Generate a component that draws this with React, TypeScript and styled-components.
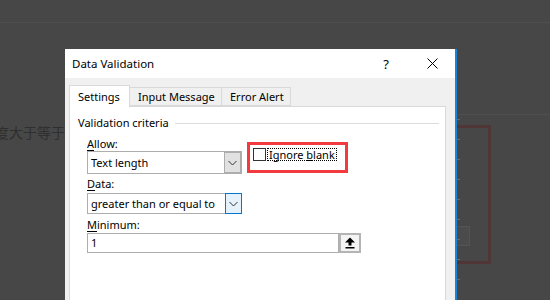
import styled, { createGlobalStyle } from "styled-components";

const GlobalStyle = createGlobalStyle`
  html, body {
    margin: 0;
    padding: 0;
  }
  body {
    width: 550px;
    height: 300px;
    overflow: hidden;
    background: #474747;
    font-family: "Noto Sans", "Segoe UI", sans-serif;
  }
`;

const Desktop = styled.div`
  position: relative;
  width: 550px;
  height: 300px;
  overflow: hidden;
  background: #474747;
`;

// sheet content behind the dialog
const SheetLine = styled.div<{ top: number; left: number; width: number }>`
  position: absolute;
  top: ${(p) => p.top}px;
  left: ${(p) => p.left}px;
  width: ${(p) => p.width}px;
  height: 1px;
  background: #4f4f4f;
`;

const SheetText = styled.div`
  position: absolute;
  left: -5px;
  top: 123px;
  font-family: "Noto Sans CJK SC", sans-serif;
  font-size: 14px;
  line-height: 18px;
  color: #2f2f2f;
  white-space: nowrap;
`;

const DimRect = styled.div`
  position: absolute;
  left: 300px;
  top: 125px;
  width: 191px;
  height: 139px;
  box-sizing: border-box;
  border: 3px solid #4f3536;
`;

const DimButton = styled.div`
  position: absolute;
  left: 452px;
  top: 226px;
  width: 18px;
  height: 20px;
  box-sizing: border-box;
  border: 1px solid #545454;
  background: #4b4b4b;
`;

const Tick = styled.div<{ top: number }>`
  position: absolute;
  left: 457px;
  top: ${(p) => p.top}px;
  width: 3px;
  height: 1px;
  background: #6a6a6a;
`;

const Dialog = styled.div`
  position: absolute;
  left: 65px;
  top: 49px;
  width: 392px;
  height: 270px;
  box-sizing: border-box;
  border-right: 2px solid #1883d7;
  background: #f0f0f0;
  display: flex;
  flex-direction: column;
  font-size: 11px;
`;

const TitleBar = styled.div`
  height: 29px;
  background: #fff;
  display: flex;
  align-items: center;
  padding-left: 7px;
`;

const Title = styled.div`
  font-size: 11.5px;
  color: #000;
  flex: 1;
`;

const CaptionButton = styled.div`
  width: 46px;
  height: 29px;
  display: flex;
  align-items: center;
  justify-content: center;
  font-size: 13px;
  color: #000;
`;

const Body = styled.div`
  flex: 1;
  padding: 7px 9px 0 4px;
  display: flex;
  flex-direction: column;
`;

const TabStrip = styled.div`
  display: flex;
  align-items: flex-end;
  height: 21px;
`;

const Tab = styled.div<{ active?: boolean; w: number }>`
  position: relative;
  z-index: ${(p) => (p.active ? 1 : 0)};
  box-sizing: border-box;
  width: ${(p) => p.w}px;
  height: ${(p) => (p.active ? 22 : 19)}px;
  margin-bottom: ${(p) => (p.active ? -1 : 0)}px;
  margin-left: ${(p) => (p.active ? 0 : -1)}px;
  border: 1px solid #d9d9d9;
  border-bottom: ${(p) => (p.active ? "none" : "1px solid #d9d9d9")};
  background: ${(p) => (p.active ? "#fff" : "#f0f0f0")};
  padding-left: 8px;
  line-height: ${(p) => (p.active ? 21 : 18)}px;
  color: #000;
  white-space: nowrap;

  &:first-child {
    margin-left: 0;
  }
`;

const Panel = styled.div`
  flex: 1;
  border: 1px solid #d9d9d9;
  background: #fff;
  padding: 8px 6px 0 8px;
`;

const GroupHeader = styled.div`
  display: flex;
  align-items: center;
  line-height: 16px;
  color: #000;
`;

const GroupRule = styled.div`
  flex: 1;
  height: 1px;
  background: #dcdcdc;
  margin-left: 6px;
`;

const Fields = styled.div`
  padding-left: 9px;
  display: flex;
  flex-direction: column;
`;

const Label = styled.div<{ gap: number }>`
  line-height: 15px;
  color: #000;
  margin-top: ${(p) => p.gap}px;

  u {
    text-decoration-thickness: 1px;
    text-underline-offset: 2px;
  }
`;

const Row = styled.div`
  display: flex;
  align-items: flex-start;
`;

const Column = styled.div`
  display: flex;
  flex-direction: column;
`;

const Combo = styled.div<{ h: number; focus?: boolean }>`
  box-sizing: border-box;
  width: 155px;
  height: ${(p) => p.h}px;
  border: 1px solid #adadad;
  background: #fff;
  display: flex;
  align-items: stretch;
  margin-top: ${(p) => (p.focus ? 2 : 0)}px;
`;

const ComboText = styled.div`
  flex: 1;
  display: flex;
  align-items: center;
  padding-left: 3px;
  color: #000;
  white-space: nowrap;
`;

const ComboButton = styled.div<{ focus?: boolean }>`
  box-sizing: border-box;
  width: 17px;
  display: flex;
  align-items: center;
  justify-content: center;
  background: ${(p) => (p.focus ? "#e5f1fb" : "#e1e1e1")};
  border: 1px solid ${(p) => (p.focus ? "#0078d7" : "#adadad")};
  margin: ${(p) => (p.focus ? "-1px -1px -1px 0" : "0")};
`;

const Highlight = styled.div`
  box-sizing: border-box;
  width: 101px;
  height: 31px;
  margin: 11px 0 -4px 5px;
  border: 3px solid #f23a3f;
  padding: 3px 0 0 3px;
  display: flex;
  align-items: flex-start;
`;

const CheckBox = styled.div`
  box-sizing: border-box;
  width: 13px;
  height: 13px;
  border: 1px solid #333;
  background: #fff;
  flex-shrink: 0;
`;

const CheckLabel = styled.div`
  margin-left: 1px;
  height: 13px;
  box-sizing: border-box;
  outline: 1px dotted #000;
  outline-offset: -1px;
  padding: 0 2px;
  line-height: 13px;
  color: #000;
  white-space: nowrap;

  u {
    text-decoration-thickness: 1px;
    text-underline-offset: 1px;
  }
`;

const InputRow = styled.div`
  display: flex;
  margin-top: 1px;
`;

const TextInput = styled.div`
  box-sizing: border-box;
  width: 252px;
  height: 20px;
  border: 1px solid #adadad;
  padding-left: 3px;
  line-height: 18px;
  color: #000;
`;

const CollapseButton = styled.div`
  box-sizing: border-box;
  width: 22px;
  height: 20px;
  border: 2px solid #b4b4b4;
  background: #f4f4f4;
  display: flex;
  align-items: center;
  justify-content: center;
`;

const Chevron = () => (
  <svg width="9" height="6" viewBox="0 0 9 6">
    <path d="M0.5 1 L4.5 5 L8.5 1" fill="none" stroke="#333" strokeWidth="1" />
  </svg>
);

const CloseIcon = () => (
  <svg width="11" height="11" viewBox="0 0 11 11">
    <path d="M0.5 0.5 L10.5 10.5 M10.5 0.5 L0.5 10.5" stroke="#000" strokeWidth="1" />
  </svg>
);

const UploadIcon = () => (
  <svg width="10" height="12" viewBox="0 0 10 12">
    <polygon points="0,5.5 5,0.5 10,5.5" fill="#000" />
    <rect x="3.5" y="5" width="3" height="3.5" fill="#000" />
    <rect x="0.5" y="10" width="9" height="1.5" fill="#000" />
  </svg>
);

export default function App() {
  const ticks = [119, 139, 159, 179, 199, 219, 239, 259, 279];
  return (
    <Desktop>
      <GlobalStyle />
      <SheetLine top={22} left={0} width={550} />
      <SheetLine top={114} left={457} width={93} />
      <SheetText>度大于等于</SheetText>
      <DimRect />
      <DimButton />
      {ticks.map((t) => (
        <Tick key={t} top={t} />
      ))}

      <Dialog>
        <TitleBar>
          <Title>Data Validation</Title>
          <CaptionButton>?</CaptionButton>
          <CaptionButton>
            <CloseIcon />
          </CaptionButton>
        </TitleBar>
        <Body>
          <TabStrip>
            <Tab active w={61}>
              Settings
            </Tab>
            <Tab w={93}>Input Message</Tab>
            <Tab w={70}>Error Alert</Tab>
          </TabStrip>
          <Panel>
            <GroupHeader>
              Validation criteria
              <GroupRule />
            </GroupHeader>
            <Fields>
              <Row>
                <Column>
                  <Label gap={5}>
                    <u>A</u>llow:
                  </Label>
                  <Combo h={23}>
                    <ComboText>Text length</ComboText>
                    <ComboButton>
                      <Chevron />
                    </ComboButton>
                  </Combo>
                </Column>
                <Highlight>
                  <CheckBox />
                  <CheckLabel>
                    Ignore <u>b</u>lank
                  </CheckLabel>
                </Highlight>
              </Row>
              <Label gap={2}>
                <u>D</u>ata:
              </Label>
              <Combo h={21} focus>
                <ComboText>greater than or equal to</ComboText>
                <ComboButton focus>
                  <Chevron />
                </ComboButton>
              </Combo>
              <Label gap={3}>
                <u>M</u>inimum:
              </Label>
              <InputRow>
                <TextInput>1</TextInput>
                <CollapseButton>
                  <UploadIcon />
                </CollapseButton>
              </InputRow>
            </Fields>
          </Panel>
        </Body>
      </Dialog>
    </Desktop>
  );
}
